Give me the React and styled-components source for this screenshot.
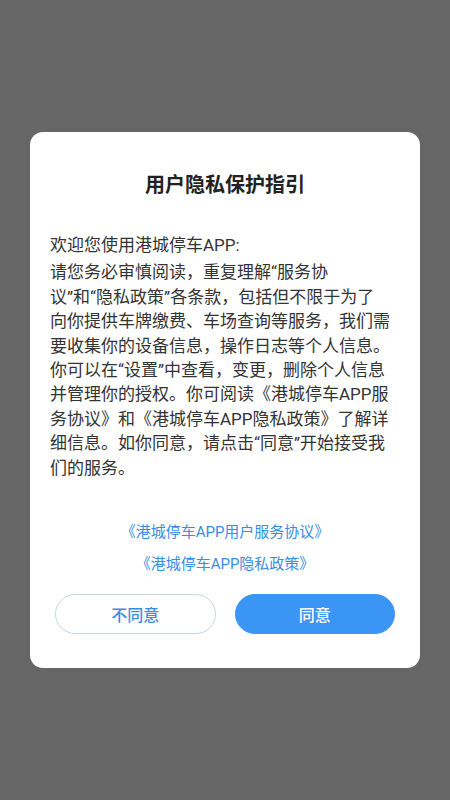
import React from "react";
import styled, { createGlobalStyle } from "styled-components";

const GlobalStyle = createGlobalStyle`
  html, body {
    margin: 0;
    padding: 0;
    background: #666666;
    font-family: "Roboto", "Noto Sans CJK SC", sans-serif;
  }
`;

const Overlay = styled.div`
  min-height: 100vh;
  display: flex;
  align-items: center;
  justify-content: center;
  background: #666666;
`;

const Dialog = styled.div`
  width: 390px;
  background: #ffffff;
  border-radius: 13px;
  padding: 40px 0 34px;
  box-sizing: border-box;
  display: flex;
  flex-direction: column;
`;

const Title = styled.h1`
  margin: 0;
  font-size: 20px;
  line-height: 26px;
  font-weight: 700;
  color: #222222;
  text-align: center;
`;

const Body = styled.div`
  margin-top: 35px;
  padding: 0 20px;
  color: #333333;
  font-size: 17px;
  line-height: 24.4px;
`;

const Paragraph = styled.p`
  margin: 0 0 ${(p) => p.$gap || 0}px;
  white-space: nowrap;
`;

const Links = styled.div`
  margin-top: 42px;
  display: flex;
  flex-direction: column;
  align-items: center;
  row-gap: 12px;
`;

const DocLink = styled.a`
  font-size: 15px;
  line-height: 20px;
  color: #3a8de3;
  text-decoration: none;
  cursor: pointer;
`;

const Actions = styled.div`
  margin-top: 20px;
  padding: 0 25px;
  display: flex;
  column-gap: 19px;
`;

const Button = styled.button`
  flex: 1;
  height: 40px;
  border-radius: 20px;
  font-family: inherit;
  font-size: 16px;
  font-weight: 500;
  cursor: pointer;
  border: 1px solid ${(p) => (p.$primary ? "#3a95f4" : "#c6d6e2")};
  background: ${(p) => (p.$primary ? "#3a95f4" : "#ffffff")};
  color: ${(p) => (p.$primary ? "#ffffff" : "#3a8de3")};
`;

const App = () => {
  return (
    <Overlay>
      <GlobalStyle />
      <Dialog>
        <Title>用户隐私保护指引</Title>
        <Body>
          <Paragraph $gap={3}>欢迎您使用港城停车APP:</Paragraph>
          <Paragraph>
            请您务必审慎阅读，重复理解“服务协
            <br />
            议”和“隐私政策”各条款，包括但不限于为了
            <br />
            向你提供车牌缴费、车场查询等服务，我们需
            <br />
            要收集你的设备信息，操作日志等个人信息。
            <br />
            你可以在“设置”中查看，变更，删除个人信息
            <br />
            并管理你的授权。你可阅读《港城停车APP服
            <br />
            务协议》和《港城停车APP隐私政策》了解详
            <br />
            细信息。如你同意，请点击“同意”开始接受我
            <br />
            们的服务。
          </Paragraph>
        </Body>
        <Links>
          <DocLink>《港城停车APP用户服务协议》</DocLink>
          <DocLink>《港城停车APP隐私政策》</DocLink>
        </Links>
        <Actions>
          <Button>不同意</Button>
          <Button $primary>同意</Button>
        </Actions>
      </Dialog>
    </Overlay>
  );
};

export default App;
